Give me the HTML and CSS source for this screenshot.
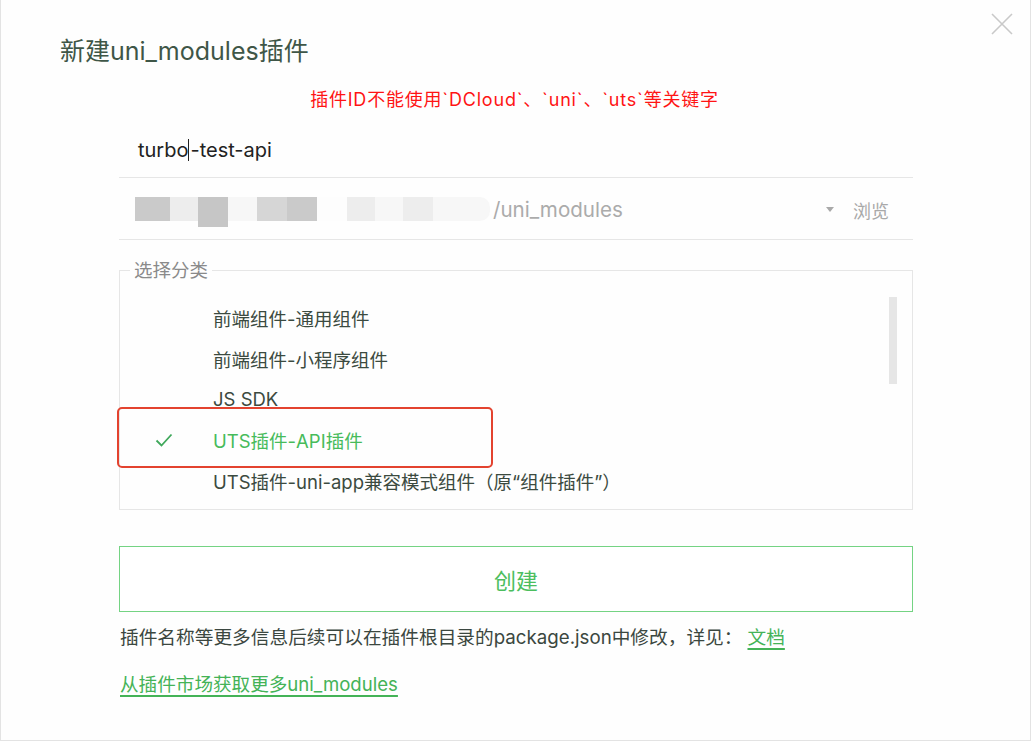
FILE: index.html
```html
<!DOCTYPE html>
<html lang="zh-CN">
<head>
<meta charset="utf-8">
<title>新建uni_modules插件</title>
<link rel="stylesheet" href="styles.css">
</head>
<body>
<div class="window">
  <button class="close" aria-label="关闭">
    <svg width="22" height="22" viewBox="0 0 22 22"><path d="M1 1L21 21M21 1L1 21" stroke="#c9c9c9" stroke-width="1.6" fill="none"/></svg>
  </button>
  <h1 class="title">新建uni_modules插件</h1>
  <p class="warning">插件ID不能使用`DCloud`、`uni`、`uts`等关键字</p>
  <div class="content">
    <div class="input-row"><span>turbo</span><span class="caret"></span><span>-test-api</span></div>
    <div class="path-row">
      <div class="mosaic">
        <span class="blk w35 s2"></span><span class="blk w28 s4"></span><span class="blk w30 s1 tall"></span><span class="blk w29 s5"></span><span class="blk w30 s3"></span><span class="blk w30 s2"></span><span class="blk w30 s6"></span><span class="blk w28 s4"></span><span class="blk w28 s5"></span><span class="blk w30 s4"></span><span class="blk w57 s5"></span>
      </div>
      <span class="path-text">/uni_modules</span>
      <span class="arrow"></span>
      <span class="browse">浏览</span>
    </div>
    <fieldset class="category">
      <legend>选择分类</legend>
      <div class="list-wrap">
        <ul class="items">
          <li class="item"><span class="mark"></span>前端组件-通用组件</li>
          <li class="item"><span class="mark"></span>前端组件-小程序组件</li>
          <li class="item"><span class="mark"></span>JS SDK</li>
          <li class="item selected"><span class="mark"><svg width="18" height="14" viewBox="0 0 18 14"><path d="M1.5 7.5L6.5 12.5L16.5 1.5" stroke="#3fa85b" stroke-width="1.8" fill="none"/></svg></span>UTS插件-API插件<span class="highlight"></span></li>
          <li class="item"><span class="mark"></span>UTS插件-uni-app兼容模式组件（原“组件插件”）</li>
        </ul>
        <div class="thumb"></div>
      </div>
    </fieldset>
    <button class="create">创建</button>
    <p class="info">插件名称等更多信息后续可以在插件根目录的package.json中修改，详见：<a class="link doc" href="#">文档</a></p>
    <p class="more"><a class="link" href="#">从插件市场获取更多uni_modules</a></p>
  </div>
</div>
</body>
</html>
```

FILE: styles.css
```css
html, body {
  margin: 0;
  padding: 0;
  background: #ffffff;
}
body {
  font-family: Inter, "Noto Sans CJK SC", sans-serif;
  color: #3b4a40;
}
.window {
  position: relative;
  width: 1029px;
  height: 740px;
  border: 1px solid #e3e3e3;
  border-top: none;
  background: #fefefe;
  box-sizing: content-box;
}
.close {
  position: absolute;
  top: 13px;
  right: 17px;
  padding: 0;
  border: none;
  background: none;
  width: 22px;
  height: 22px;
}
.title {
  margin: 0;
  padding: 34px 0 0 59px;
  font-size: 25px;
  line-height: 34px;
  font-weight: 400;
  color: #3f5647;
}
.warning {
  margin: 20px 0 0;
  text-align: center;
  font-size: 18px;
  letter-spacing: 0.8px;
  line-height: 24px;
  color: #ff1414;
  padding-right: 2px;
}
.content {
  margin: 11px 0 0 118px;
  width: 794px;
}
.input-row {
  height: 54px;
  border-bottom: 1px solid #e6e6e6;
  display: flex;
  align-items: center;
  padding-left: 19px;
  font-size: 20px;
  color: #222;
}
.caret {
  width: 1px;
  height: 22px;
  background: #222;
  margin: 0 1px 0 0;
}
.path-row {
  height: 61px;
  border-bottom: 1px solid #e6e6e6;
  display: flex;
  align-items: center;
  padding-left: 16px;
  padding-right: 24px;
  padding-top: 2px;
  box-sizing: border-box;
  height: 62px;
}
.mosaic {
  display: flex;
  align-items: flex-start;
  height: 30px;
  margin-top: 4px;
}
.blk { display: block; height: 24px; }
.blk.tall { height: 30px; }
.w28 { width: 28px; }
.w29 { width: 29px; }
.w30 { width: 30px; }
.w35 { width: 35px; }
.w57 { width: 57px; border-radius: 0 10px 10px 0; }
.s1 { background: #c6c6c6; }
.s2 { background: #cacaca; }
.s3 { background: #d6d6d6; }
.s4 { background: #ededed; }
.s5 { background: #f7f7f7; }
.s6 { background: #fdfdfd; }
.path-text {
  margin-left: 3px;
  font-size: 20.6px;
  color: #ababab;
  flex: 1;
}
.arrow {
  width: 0;
  height: 0;
  border-left: 4px solid transparent;
  border-right: 4px solid transparent;
  border-top: 5px solid #a9a9a9;
  margin-right: 19px;
}
.browse {
  font-size: 18px;
  color: #a9a9a9;
}
.category {
  margin: 18px 0 0;
  padding: 0;
  border: 1px solid #e6e6e6;
  min-width: 0;
  height: 252px;
  box-sizing: border-box;
}
.category legend {
  margin-left: 10px;
  padding: 0 4px;
  font-size: 18.5px;
  line-height: 24px;
  color: #8a8a8a;
}
.list-wrap {
  display: flex;
  align-items: flex-start;
}
.items {
  list-style: none;
  margin: 0;
  padding: 16px 0 0;
  flex: 1;
}
.item {
  position: relative;
  display: flex;
  align-items: center;
  height: 40.6px;
  padding-left: 35px;
  font-size: 18.5px;
  color: #3b4a40;
}
.item.selected { color: #47bb5b; }
.mark {
  display: flex;
  align-items: center;
  width: 58px;
  height: 20px;
}
.highlight {
  position: absolute;
  left: -3px;
  top: -12.5px;
  width: 376px;
  height: 61px;
  box-sizing: border-box;
  border: 2px solid #e3432f;
  border-radius: 5px;
}
.thumb {
  width: 8px;
  height: 87px;
  margin: 15px 15px 0 0;
  background: #e6e6e6;
}
.create {
  display: block;
  width: 100%;
  height: 66px;
  margin-top: 36px;
  border: 1px solid #74d383;
  background: #fff;
  font-family: Inter, "Noto Sans CJK SC", sans-serif;
  font-size: 22px;
  color: #4cbe5e;
}
.info {
  margin: 13px 0 0 1px;
  font-size: 18.7px;
  line-height: 26px;
  color: #3b4740;
}
.link {
  color: #44b357;
  text-decoration: underline;
  text-underline-offset: 4px;
  text-decoration-thickness: 2px;
}
.doc { margin-left: 5px; }
.more {
  margin: 20px 0 0 1px;
  font-size: 18.6px;
  line-height: 26px;
}
```
